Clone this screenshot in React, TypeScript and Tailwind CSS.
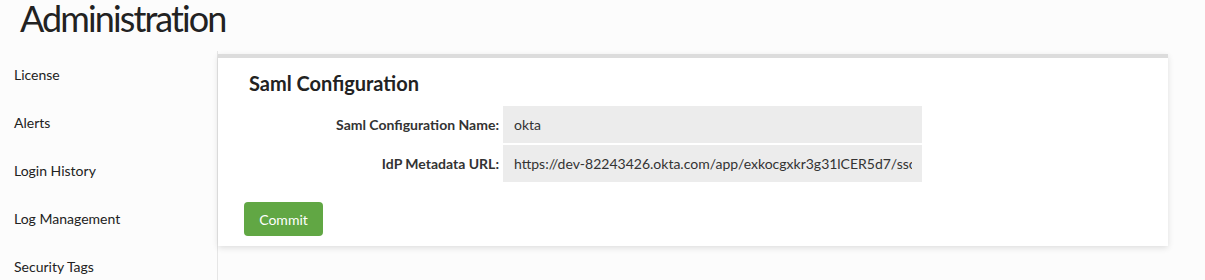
const navItems = ["License", "Alerts", "Login History", "Log Management", "Security Tags"];

function Field({ label, value }: { label: string; value: string }) {
  return (
    <div className="flex items-stretch">
      <div className="w-[259px] pr-[4px] flex items-center justify-end text-[14px] font-bold text-[#333]">
        {label}
      </div>
      <div className="w-[419px] h-[37px] bg-[#ececec] pl-[11px] pr-[10px] flex items-center overflow-hidden text-[14px] text-[#333] whitespace-nowrap">
        <span className="block overflow-hidden w-full">{value}</span>
      </div>
    </div>
  );
}

export default function App() {
  return (
    <div
      className="w-[1205px] h-[280px] overflow-hidden bg-[#fcfcfc] text-[#222]"
      style={{ fontFamily: "Lato, 'Open Sans', sans-serif" }}
    >
      <h1 className="h-[51px] pl-[20px] text-[36px] leading-[36px] tracking-[-1.9px] font-normal text-[#222]">
        Administration
      </h1>
      <div className="flex h-[229px]">
        <nav className="w-[218px] shrink-0 border-r border-[#e6e6e6]">
          <div className="-mt-[1px]">
            {navItems.map((item) => (
              <div key={item} className="h-12 flex items-center pl-[14px] text-[14px] text-[#222]">
                {item}
              </div>
            ))}
          </div>
        </nav>
        <main className="flex-1 pt-[3px] pr-[37px]">
          <div className="bg-white border-t-4 border-[#dcdcdc] shadow-[0_2px_6px_rgba(0,0,0,0.12)] px-[26px] pt-[12px] pb-[10px]">
            <h3 className="pl-[5px] text-[20px] font-bold leading-[26px] text-[#222]">
              Saml Configuration
            </h3>
            <div className="mt-[10px] flex flex-col gap-[2px]">
              <Field label="Saml Configuration Name:" value="okta" />
              <Field
                label="IdP Metadata URL:"
                value="https://dev-82243426.okta.com/app/exkocgxkr3g31lCER5d7/sso/saml/metadata"
              />
            </div>
            <button className="mt-[20px] w-[79px] h-[34px] rounded-[4px] bg-[#61a744] text-white text-[14px]">
              Commit
            </button>
          </div>
        </main>
      </div>
    </div>
  );
}
